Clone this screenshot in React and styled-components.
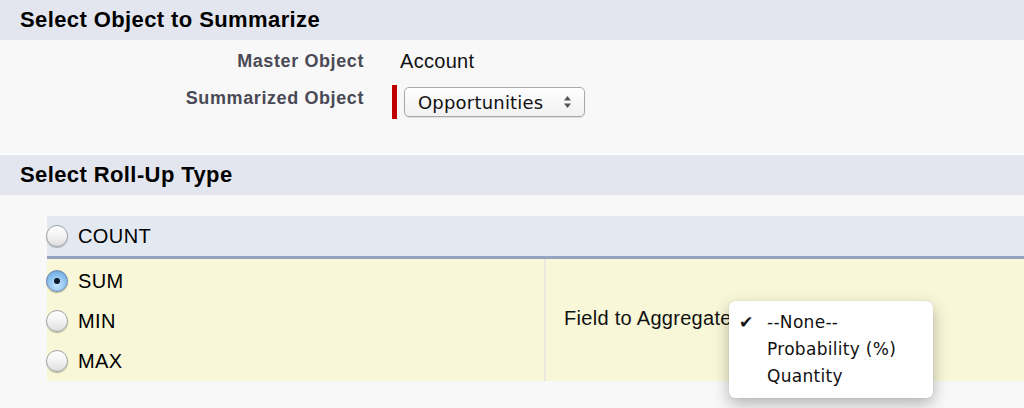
import React from 'react';
import styled, { createGlobalStyle } from 'styled-components';

const GlobalStyle = createGlobalStyle`
  html, body {
    margin: 0;
    padding: 0;
    background: #f8f8f8;
  }
  body {
    font-family: 'Liberation Sans', Arial, Helvetica, sans-serif;
    color: #111;
  }
`;

const rollUpTypes = ['SUM', 'MIN', 'MAX'];
const aggregateOptions = ['--None--', 'Probability (%)', 'Quantity'];

const Radio = ({ checked }) => (
  <RadioCircle checked={checked}>{checked && <RadioDot />}</RadioCircle>
);

const SelectArrows = () => (
  <svg width="9" height="14" viewBox="0 0 9 14">
    <path d="M4.5 1 L8 5.5 H1 Z" fill="#555" />
    <path d="M4.5 13 L8 8.5 H1 Z" fill="#555" />
  </svg>
);

export default function App() {
  return (
    <Page>
      <GlobalStyle />
      <SectionHeader>Select Object to Summarize</SectionHeader>
      <ObjectBody>
        <FieldRow>
          <FieldLabel>Master Object</FieldLabel>
          <FieldValue>Account</FieldValue>
        </FieldRow>
        <FieldRow>
          <FieldLabel>Summarized Object</FieldLabel>
          <RequiredWrap>
            <RequiredBar />
            <SelectBox>
              <span>Opportunities</span>
              <SelectArrows />
            </SelectBox>
          </RequiredWrap>
        </FieldRow>
      </ObjectBody>
      <Separator />
      <SectionHeader>Select Roll-Up Type</SectionHeader>
      <RollUpBody>
        <RollUpTable>
          <CountRow>
            <Radio />
            <OptionText>COUNT</OptionText>
          </CountRow>
          <AggregateBlock>
            <TypeColumn>
              {rollUpTypes.map((t) => (
                <TypeRow key={t}>
                  <Radio checked={t === 'SUM'} />
                  <OptionText>{t}</OptionText>
                </TypeRow>
              ))}
            </TypeColumn>
            <FieldColumn>
              <AggregateLabel>Field to Aggregate</AggregateLabel>
              <HiddenArrows>
                <SelectArrows />
              </HiddenArrows>
              <Menu>
                {aggregateOptions.map((o, i) => (
                  <MenuItem key={o}>
                    <Check>{i === 0 ? '✔' : ''}</Check>
                    {o}
                  </MenuItem>
                ))}
              </Menu>
            </FieldColumn>
          </AggregateBlock>
        </RollUpTable>
      </RollUpBody>
    </Page>
  );
}

const Page = styled.div`
  width: 1024px;
  height: 408px;
  overflow: hidden;
  background: #f8f8f8;
`;

const SectionHeader = styled.div`
  height: 40px;
  display: flex;
  align-items: center;
  padding-left: 20px;
  background: #e3e6ee;
  font-weight: bold;
  font-size: 22px;
  letter-spacing: 0.4px;
  color: #000;
`;

const ObjectBody = styled.div`
  height: 113px;
  box-sizing: border-box;
  padding-top: 8px;
  display: flex;
  flex-direction: column;
  gap: 12px;
`;

const FieldRow = styled.div`
  display: grid;
  grid-template-columns: 364px 1fr;
  column-gap: 28px;
  align-items: start;
`;

const FieldLabel = styled.div`
  text-align: right;
  font-weight: bold;
  font-size: 18px;
  letter-spacing: 0.6px;
  color: #4a4a56;
  padding-top: 3px;
`;

const FieldValue = styled.div`
  padding-left: 8px;
  font-size: 20px;
  padding-top: 2px;
  letter-spacing: 0.3px;
  color: #111;
`;

const RequiredWrap = styled.div`
  display: flex;
  align-items: center;
  gap: 7px;
`;

const RequiredBar = styled.div`
  width: 5px;
  height: 34px;
  background: #c00000;
`;

const SelectBox = styled.div`
  width: 181px;
  height: 30px;
  box-sizing: border-box;
  display: flex;
  align-items: center;
  justify-content: space-between;
  padding: 0 12px 0 13px;
  border: 1px solid #a9a9a9;
  border-radius: 5px;
  background: linear-gradient(#ffffff, #f1f1f1);
  box-shadow: 0 1px 1px rgba(0, 0, 0, 0.12);
  font-family: 'DejaVu Sans', sans-serif;
  font-size: 18px;
  letter-spacing: 0.2px;
  color: #111;
`;

const Separator = styled.div`
  height: 2px;
  background: #ffffff;
`;

const RollUpBody = styled.div`
  padding: 21px 0 0 47px;
`;

const RollUpTable = styled.div`
  display: flex;
  flex-direction: column;
`;

const CountRow = styled.div`
  height: 40px;
  display: flex;
  align-items: center;
  gap: 10px;
  background: #e3e9f1;
  border-bottom: 3px solid #95a3c1;
`;

const AggregateBlock = styled.div`
  display: flex;
  height: 122px;
  background: #f8f7d8;
`;

const TypeColumn = styled.div`
  width: 497px;
  border-right: 2px solid #e9e9e2;
  display: flex;
  flex-direction: column;
  padding-top: 2px;
`;

const TypeRow = styled.div`
  height: 40px;
  display: flex;
  align-items: center;
  gap: 10px;
`;

const OptionText = styled.span`
  font-size: 20px;
  letter-spacing: 0.4px;
  color: #000;
`;

const RadioCircle = styled.span`
  width: 22px;
  height: 22px;
  margin-left: -1px;
  box-sizing: border-box;
  border-radius: 50%;
  display: flex;
  align-items: center;
  justify-content: center;
  border: 1px solid ${(p) => (p.checked ? '#6d88ad' : '#a3a3a3')};
  background: ${(p) =>
    p.checked
      ? 'radial-gradient(circle at 50% 70%, #c7e4fb 0%, #8bc1ef 55%, #5b9ad8 100%)'
      : 'linear-gradient(#ffffff 0%, #f3f3f3 50%, #dedede 100%)'};
  box-shadow: 0 1px 1px rgba(0, 0, 0, 0.25);
`;

const RadioDot = styled.span`
  width: 6px;
  height: 6px;
  border-radius: 50%;
  background: #111a2a;
`;

const FieldColumn = styled.div`
  position: relative;
  flex: 1;
  display: flex;
  align-items: center;
  padding-left: 18px;
`;

const AggregateLabel = styled.span`
  font-size: 20px;
  letter-spacing: 0.3px;
  color: #111;
  margin-top: -4px;
`;

const HiddenArrows = styled.span`
  position: absolute;
  left: 366px;
  top: 55px;
  opacity: 0.15;
`;

const Menu = styled.div`
  position: absolute;
  left: 183px;
  top: 42px;
  width: 204px;
  height: 97px;
  box-sizing: border-box;
  padding-top: 7px;
  background: #ffffff;
  border-radius: 6px;
  box-shadow: 0 6px 16px rgba(0, 0, 0, 0.28), 0 0 1px rgba(0, 0, 0, 0.25);
  font-family: 'DejaVu Sans', sans-serif;
  font-size: 17px;
  letter-spacing: 0.3px;
  color: #111;
`;

const MenuItem = styled.div`
  height: 27px;
  display: flex;
  align-items: center;
`;

const Check = styled.span`
  width: 38px;
  padding-left: 10px;
  box-sizing: border-box;
  font-size: 17px;
  color: #111;
`;
